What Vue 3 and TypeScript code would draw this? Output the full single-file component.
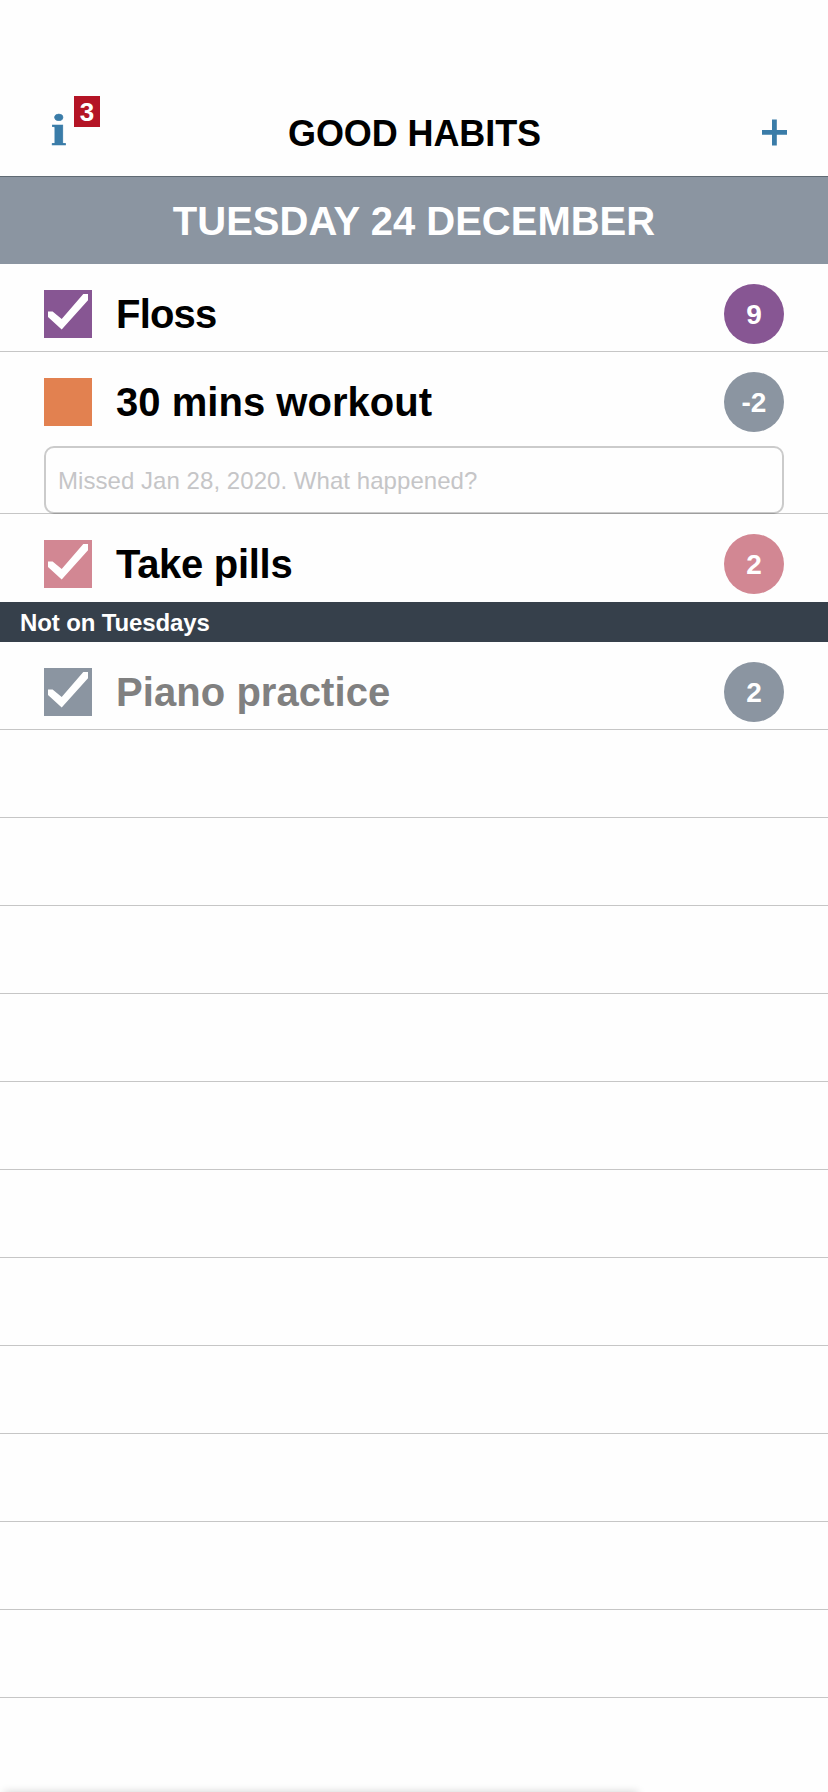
<script setup lang="ts">
interface Habit {
  name: string
  streak: number
  color: string
  badge: string
  done: boolean
  tracking: number
  muted?: boolean
  note?: string
}

const today: Habit[] = [
  { name: 'Floss', streak: 9, color: '#875693', badge: '#875693', done: true, tracking: -0.8 },
  {
    name: '30 mins workout',
    streak: -2,
    color: '#e28150',
    badge: '#8b95a1',
    done: false,
    tracking: 0.03,
    note: 'Missed Jan 28, 2020. What happened?',
  },
  { name: 'Take pills', streak: 2, color: '#d28793', badge: '#d28793', done: true, tracking: -0.3 },
]

const otherDays: Habit[] = [
  {
    name: 'Piano practice',
    streak: 2,
    color: '#8b95a1',
    badge: '#8b95a1',
    done: true,
    tracking: 0.06,
    muted: true,
  },
]

const sections = [
  { title: '', habits: today },
  { title: 'Not on Tuesdays', habits: otherDays },
]

const emptyRows = 11
</script>

<template>
  <div class="screen">
    <header class="nav">
      <button class="info" aria-label="Info">
        <span class="info-glyph">i</span>
        <span class="info-count">3</span>
      </button>
      <h1 class="title">GOOD HABITS</h1>
      <button class="add" aria-label="Add habit">
        <svg width="26" height="28" viewBox="0 0 26 28">
          <path d="M12.4 1.5V27.5M0 14.4H25" stroke="#3a7ca8" stroke-width="4.8" fill="none" />
        </svg>
      </button>
    </header>

    <div class="date">TUESDAY 24 DECEMBER</div>

    <section v-for="section in sections" :key="section.title" class="section">
      <h2 v-if="section.title" class="section-title">{{ section.title }}</h2>
      <article v-for="habit in section.habits" :key="habit.name" class="habit">
        <div class="habit-main">
          <span class="box" :style="{ background: habit.color }">
            <svg v-if="habit.done" width="48" height="48" viewBox="0 0 48 48">
              <path d="M4 21.5H8.6L17.7 29L39.3 4H44V10.3L17.7 39.4L4 27Z" fill="#fff" />
            </svg>
          </span>
          <span
            class="name"
            :class="{ muted: habit.muted }"
            :style="{ letterSpacing: habit.tracking + 'px' }"
          >{{ habit.name }}</span>
          <span class="streak" :style="{ background: habit.badge }">{{ habit.streak }}</span>
        </div>
        <input v-if="habit.note" class="note" type="text" :placeholder="habit.note" />
      </article>
    </section>

    <div v-for="n in emptyRows" :key="n" class="empty"></div>
    <div class="drawer"></div>
  </div>
</template>

<style>
body {
  margin: 0;
  background: #fefefe;
}
</style>

<style scoped>
.screen {
  position: relative;
  width: 828px;
  height: 1792px;
  overflow: hidden;
  background: #fefefe;
  font-family: "Liberation Sans", Arial, sans-serif;
  font-weight: 700;
  color: #000;
}

.nav {
  box-sizing: border-box;
  height: 177px;
  padding: 88px 40px 0 44px;
  border-bottom: 1px solid #5f6a73;
  display: grid;
  grid-template-columns: 100px 1fr 100px;
  align-items: center;
}

button {
  border: 0;
  padding: 0;
  background: none;
  font: inherit;
}

.info {
  position: relative;
  height: 88px;
}

.info-glyph {
  position: absolute;
  left: 7px;
  top: 18px;
  font: 700 44px/50px "Liberation Serif", serif;
  color: #3a7ca8;
  -webkit-text-stroke: 0.6px #3a7ca8;
  transform: scaleX(1.25);
  transform-origin: left;
}

.info-count {
  position: absolute;
  left: 30px;
  top: 8px;
  width: 26px;
  height: 31px;
  background: #b41425;
  color: #fff;
  font-size: 26px;
  line-height: 32px;
  text-align: center;
}

.title {
  margin: 0;
  padding: 3px 3px 0 0;
  font-size: 36px;
  line-height: 40px;
  text-align: center;
  letter-spacing: -0.1px;
}

.add {
  display: flex;
  justify-content: flex-end;
}

.date {
  height: 87px;
  background: #8b95a1;
  color: #fff;
  font-size: 40px;
  line-height: 88px;
  text-align: center;
  white-space: nowrap;
}

.section-title {
  margin: 0;
  height: 40px;
  padding-left: 20px;
  background: #36404b;
  color: #fff;
  font-size: 24px;
  line-height: 41px;
  letter-spacing: -0.13px;
}

.habit {
  position: relative;
}

.habit::after {
  content: "";
  position: absolute;
  left: 0;
  right: 0;
  bottom: 0;
  height: 1px;
  background: rgba(0, 0, 0, 0.22);
}

.section:first-of-type .habit:last-child::after {
  display: none;
}

.habit-main {
  box-sizing: border-box;
  height: 88px;
  padding: 12px 44px 0;
  display: flex;
  align-items: center;
}

.box {
  width: 48px;
  height: 48px;
}

.box svg {
  display: block;
}

.name {
  flex: 1;
  margin-left: 24px;
  font-size: 40px;
  line-height: 48px;
}

.muted {
  color: #808080;
}

.streak {
  width: 60px;
  height: 60px;
  border-radius: 50%;
  color: #fff;
  font-size: 28px;
  line-height: 61px;
  text-align: center;
}

.note {
  display: block;
  box-sizing: border-box;
  width: 740px;
  height: 68px;
  margin: 6px 44px 0;
  padding: 2px 12px 0;
  border: 2px solid #cbcbcb;
  border-radius: 10px;
  background: #fefefe;
  font: 400 24px "Liberation Sans", Arial, sans-serif;
  letter-spacing: 0.05px;
  outline: none;
}

.note::placeholder {
  color: #c5c5c7;
  opacity: 1;
}

.empty {
  box-sizing: border-box;
  height: 88px;
  border-bottom: 1px solid #c6c6c6;
}

.drawer {
  position: absolute;
  left: 4px;
  top: 1792px;
  width: 634px;
  height: 20px;
  box-shadow: 0 0 8px rgba(0, 0, 0, 0.18);
}
</style>
